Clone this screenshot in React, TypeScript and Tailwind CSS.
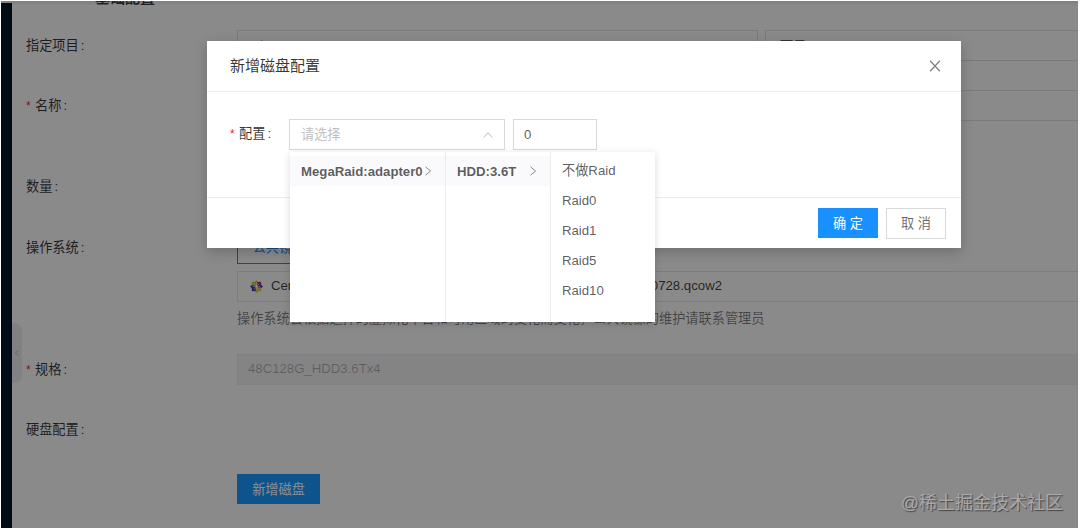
import type { ReactNode } from "react";

function Row({ label, required, className, children }: { label: string; required?: boolean; className: string; children?: ReactNode }) {
  return (
    <div className={`flex items-start ${className}`}>
      <div className="flex h-[31px] w-[211px] shrink-0 items-center whitespace-nowrap pt-px text-black/80">
        {required && <span className="mr-[4px] w-[5px] text-[12px] text-[#f5222d]">*</span>}
        {label}
        <span className="ml-[2px]">:</span>
      </div>
      <div className="min-w-0 flex-1">{children}</div>
    </div>
  );
}

function Chevron({ d, className }: { d: string; className: string }) {
  return (
    <svg viewBox="0 0 10 10" fill="none" stroke="currentColor" className={className}>
      <path d={d} />
    </svg>
  );
}

function ImageLogo() {
  return (
    <svg viewBox="0 0 14 14" className="h-[13px] w-[13px] shrink-0">
      <path d="M7 0 9 2.2V6H5V2.2Z" fill="#e0c93c" />
      <path d="M7 14 5 11.8V8H9V11.8Z" fill="#e0c03c" />
      <path d="M0 7 2.2 5H6V9H2.2Z" fill="#4c3a96" />
      <path d="M14 7 11.8 9H8V5H11.8Z" fill="#5a2a8c" />
      <path d="M2 2H6V6H2Z" fill="#c5c850" />
      <path d="M12 2V6H8V2Z" fill="#a0307c" />
      <path d="M2 12V8H6V12Z" fill="#50379a" />
      <path d="M12 12H8V8H12Z" fill="#e8c545" />
      <path d="M4 4 10 10M10 4 4 10M7 3V11M3 7H11" stroke="#fff" strokeWidth=".6" />
    </svg>
  );
}

const raidLevels = ["不做Raid", "Raid0", "Raid1", "Raid5", "Raid10"];

function CascadeMenu() {
  return (
    <div className="absolute top-[33px] left-px flex h-[170px] w-[365px] bg-white text-black/65 shadow-[0_2px_8px_rgba(0,0,0,0.15)]">
      <div className="w-[156px] border-r border-[#ececec] pt-[4px]">
        <div className="flex h-[30px] items-center bg-[#fafafc] pl-[11px] font-bold">
          <span className="w-[122px] whitespace-nowrap pt-px text-[13.2px]">MegaRaid:adapter0</span>
          <Chevron d="M2.5 .8 7.5 5 2.5 9.2" className="h-[10px] w-[10px] text-black/45" />
        </div>
      </div>
      <div className="w-[105px] border-r border-[#ececec] pt-[4px]">
        <div className="flex h-[30px] items-center bg-[#fafafc] pl-[11px] font-bold">
          <span className="w-[71px] pt-px">HDD:3.6T</span>
          <Chevron d="M2.5 .8 7.5 5 2.5 9.2" className="h-[10px] w-[10px] text-black/45" />
        </div>
      </div>
      <div className="flex-1 pt-[4.5px]">
        {raidLevels.map((level) => (
          <div key={level} className="flex h-[29.8px] items-center pl-[11px]">{level}</div>
        ))}
      </div>
    </div>
  );
}

function DiskModal() {
  return (
    <div className="absolute top-[41px] left-[207px] flex h-[207px] w-[754px] flex-col bg-white shadow-[0_4px_12px_rgba(0,0,0,0.2)]">
      <div className="flex h-[51px] shrink-0 items-center justify-between border-b border-[#ececec] pr-[20px] pl-[23px]">
        <h2 className="text-[15px] text-black/80">新增磁盘配置</h2>
        <Chevron d="M.9 .6 9.1 9.4M9.1 .6.9 9.4" className="h-[12px] w-[12px] text-black/50" />
      </div>
      <div className="flex flex-1 items-start pt-[27px] pl-[23px]">
        <div className="flex h-[30px] w-[59px] shrink-0 items-center text-black/80">
          <span className="mr-[4px] w-[5px] text-[12px] text-[#f5222d]">*</span>
          配置<span className="ml-[2px]">:</span>
        </div>
        <div className="relative">
          <div className="flex h-[31px] w-[216px] items-center justify-between border border-[#d9d9d9] pr-[11px] pl-[11px] text-[#bfbfbf]">
            请选择
            <Chevron d="M.8 7.5 5 2.5 9.2 7.5" className="h-[10px] w-[10px]" />
          </div>
          <CascadeMenu />
        </div>
        <div className="ml-[8px] flex h-[31px] w-[84px] items-center border border-[#d9d9d9] pl-[10px] text-black/65">0</div>
      </div>
      <div className="flex h-[51px] shrink-0 items-center justify-end gap-[8px] border-t border-[#ececec] pr-[15px]">
        <button className="h-[30px] w-[60px] bg-[#1890ff] pt-[2px] text-white">确 定</button>
        <button className="h-[31px] w-[60px] border border-[#d9d9d9] bg-white pt-[2px] text-black/60">取 消</button>
      </div>
    </div>
  );
}

export default function App() {
  return (
    <div className="relative h-[531px] w-[1080px] overflow-hidden bg-white p-px font-['Liberation_Sans','Noto_Sans_CJK_SC',sans-serif] text-[13.2px] leading-[20px]">
      <div className="flex h-[527px] w-[1077px] overflow-hidden bg-[#fdfbfe]">
        <aside className="mt-[2px] w-[11px] shrink-0 bg-[#001529]" />
        <main className="relative min-w-0 flex-1 pl-[14px]">
          <div className="flex h-[29px] items-start">
            <div className="-mt-[13px] ml-[69px] h-[20px] text-[15px] font-bold text-black/75">基础配置</div>
          </div>
          <Row label="指定项目" className="h-[60px]">
            <div className="flex gap-[7px]">
              <div className="flex h-[31px] w-[521px] shrink-0 items-center border border-[#dedde0] pt-px pl-[17px] text-black/65">
                <span className="mr-[5px]">⁂</span>Default
              </div>
              <div className="flex h-[31px] w-[320px] shrink-0 items-center border border-[#dedde0] pt-[3px] pl-[14px] text-black/65">项目</div>
            </div>
          </Row>
          <Row label="名称" required className="h-[81px]">
            <div className="h-[31px] w-[850px] border border-[#e0dfe2]" />
          </Row>
          <Row label="数量" className="h-[61px]" />
          <Row label="操作系统" className="h-[122px]">
            <div className="flex h-[32px] w-[84px] items-center justify-center border border-[#1890ff] text-[#1890ff]">公共镜像</div>
            <div className="mt-[7px] flex h-[31px] w-[850px] items-center border border-[#e3e2e5] pl-[12px]">
              <ImageLogo />
              <div className="ml-[8px] flex w-[451px] justify-between pb-px text-black/75">
                <span>CentOS</span><span>CentOS-7-x86_64-20200728.qcow2</span>
              </div>
            </div>
            <div className="mt-[7px] whitespace-nowrap text-black/50">操作系统会根据选择的虚拟化平台和可用区域的变化而变化，公共镜像的维护请联系管理员</div>
          </Row>
          <Row label="规格" required className="h-[60px]">
            <div className="flex h-[31px] w-[850px] items-center border border-[#eae8eb] bg-[#f2f0f3] pb-px pl-[10px] text-black/28">48C128G_HDD3.6Tx4</div>
          </Row>
          <Row label="硬盘配置" className="h-[60px]" />
          <button className="ml-[211px] block h-[30px] w-[83px] bg-[#1c98ff] pt-px text-white">新增磁盘</button>
          <div className="absolute top-[322px] left-0 flex h-[60px] w-[10px] items-center justify-center rounded-r-[8px] bg-[#ececee] text-[#aaa]">
            <Chevron d="M7 1.5 3 5 7 8.5" className="h-[8px] w-[8px]" />
          </div>
        </main>
      </div>
      <div className="absolute top-px left-px h-[527px] w-[1077px] bg-black/45 shadow-[inset_0_3px_2px_rgba(0,0,0,0.06)]" />
      <DiskModal />
      <div className="absolute right-[17px] bottom-[16px] text-[18px] leading-[24px] text-[#a9a8aa] [text-shadow:1px_1px_1px_#444]">@稀土掘金技术社区</div>
    </div>
  );
}
